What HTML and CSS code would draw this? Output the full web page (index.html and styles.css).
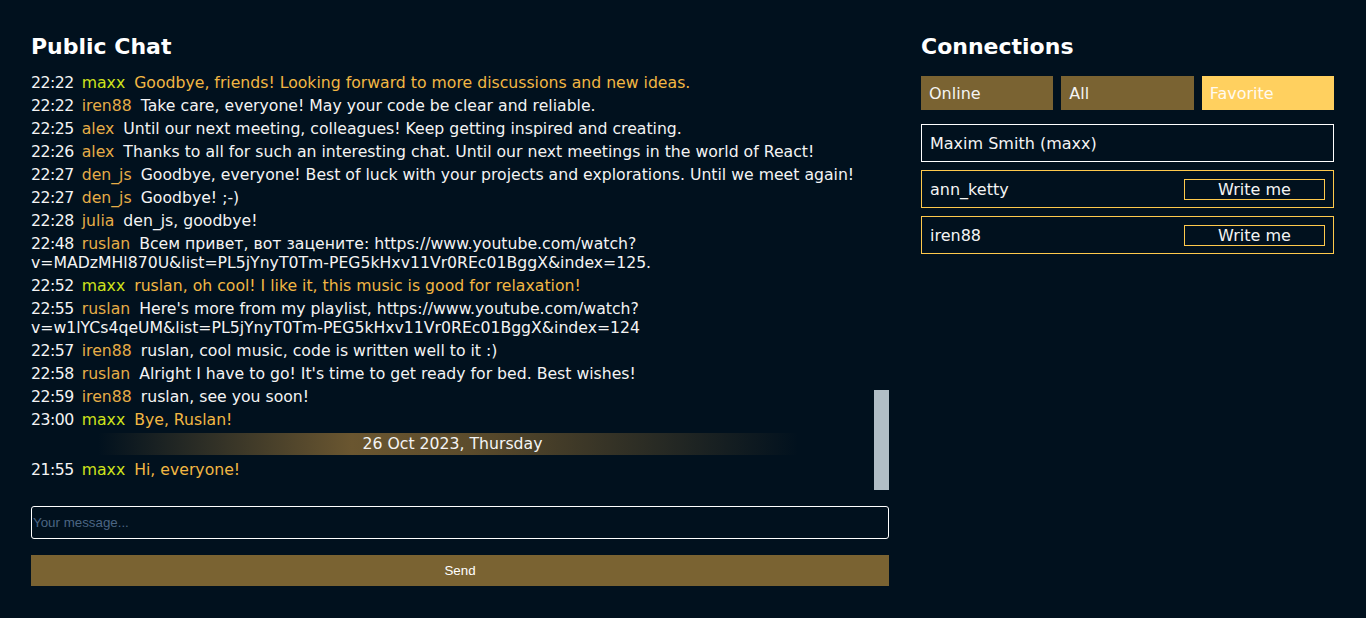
FILE: index.html
```html
<!DOCTYPE html>
<html lang="en">
<head>
<meta charset="utf-8">
<title>Public Chat</title>
<link rel="stylesheet" href="styles.css">
</head>
<body>
<main class="page">
  <section class="chat">
    <h2 class="title">Public Chat</h2>
    <div class="chat-body">
      <div class="scroller">
        <div class="log">
          <div class="msg own"><span class="time">22:22</span><span class="name">maxx</span><span class="text">Goodbye, friends! Looking forward to more discussions and new ideas.</span></div>
          <div class="msg"><span class="time">22:22</span><span class="name">iren88</span><span class="text">Take care, everyone! May your code be clear and reliable.</span></div>
          <div class="msg"><span class="time">22:25</span><span class="name">alex</span><span class="text">Until our next meeting, colleagues! Keep getting inspired and creating.</span></div>
          <div class="msg"><span class="time">22:26</span><span class="name">alex</span><span class="text">Thanks to all for such an interesting chat. Until our next meetings in the world of React!</span></div>
          <div class="msg"><span class="time">22:27</span><span class="name">den_js</span><span class="text">Goodbye, everyone! Best of luck with your projects and explorations. Until we meet again!</span></div>
          <div class="msg"><span class="time">22:27</span><span class="name">den_js</span><span class="text">Goodbye! ;-)</span></div>
          <div class="msg"><span class="time">22:28</span><span class="name">julia</span><span class="text">den_js, goodbye!</span></div>
          <div class="msg"><span class="time">22:48</span><span class="name">ruslan</span><span class="text">Всем привет, вот зацените: https://www.youtube.com/watch?<wbr>v=MADzMHl870U&amp;list=PL5jYnyT0Tm-PEG5kHxv11Vr0REc01BggX&amp;index=125.</span></div>
          <div class="msg own"><span class="time">22:52</span><span class="name">maxx</span><span class="text">ruslan, oh cool! I like it, this music is good for relaxation!</span></div>
          <div class="msg"><span class="time">22:55</span><span class="name">ruslan</span><span class="text">Here's more from my playlist, https://www.youtube.com/watch?<wbr>v=w1lYCs4qeUM&amp;list=PL5jYnyT0Tm-PEG5kHxv11Vr0REc01BggX&amp;index=124</span></div>
          <div class="msg"><span class="time">22:57</span><span class="name">iren88</span><span class="text">ruslan, cool music, code is written well to it :)</span></div>
          <div class="msg"><span class="time">22:58</span><span class="name">ruslan</span><span class="text">Alright I have to go! It's time to get ready for bed. Best wishes!</span></div>
          <div class="msg"><span class="time">22:59</span><span class="name">iren88</span><span class="text">ruslan, see you soon!</span></div>
          <div class="msg own"><span class="time">23:00</span><span class="name">maxx</span><span class="text">Bye, Ruslan!</span></div>
          <div class="day">26 Oct 2023, Thursday</div>
          <div class="msg own"><span class="time">21:55</span><span class="name">maxx</span><span class="text">Hi, everyone!</span></div>
        </div>
      </div>
      <div class="rail"><div class="thumb"></div></div>
    </div>
    <form class="composer">
      <input class="field" type="text" placeholder="Your message...">
      <button class="send" type="button">Send</button>
    </form>
  </section>

  <aside class="connections">
    <h2 class="title">Connections</h2>
    <div class="tabs">
      <button class="tab" type="button">Online</button>
      <button class="tab" type="button">All</button>
      <button class="tab tab-active" type="button">Favorite</button>
    </div>
    <ul class="contacts">
      <li class="contact contact-self">Maxim Smith (maxx)</li>
      <li class="contact"><span>ann_ketty</span><button class="write" type="button">Write me</button></li>
      <li class="contact"><span>iren88</span><button class="write" type="button">Write me</button></li>
    </ul>
  </aside>
</main>
</body>
</html>
```

FILE: styles.css
```css
* { box-sizing: border-box; }

html, body {
  margin: 0;
  height: 100%;
}

body {
  background: #01111e;
  color: #f4f4f4;
  font-family: "DejaVu Sans", "Noto Sans", sans-serif;
  font-size: 15.7px;
  overflow: hidden;
}

.page {
  display: grid;
  grid-template-columns: 1fr 413px;
  column-gap: 32px;
  padding: 31px 32px 0 31px;
}

.title {
  margin: 0 0 7px;
  font-size: 22px;
  line-height: 32px;
  font-weight: 700;
  color: #ffffff;
}

/* chat log */
.chat-body {
  display: flex;
  height: 420px;
}

.scroller {
  flex: 1;
  min-width: 0;
  overflow: hidden;
  display: flex;
  flex-direction: column;
  justify-content: flex-end;
}

.rail {
  width: 15px;
  display: flex;
  flex-direction: column;
  justify-content: flex-end;
}

.thumb {
  height: 100px;
  background: #b1bec6;
}

.log {
  padding: 0 0 7px;
}

.msg {
  line-height: 19px;
  margin-bottom: 4px;
  color: #f4f4f4;
}

.time {
  margin-right: 8px;
  letter-spacing: -0.5px;
}

.name {
  margin-right: 9px;
  color: #e6ad47;
}

.own .name { color: #cfe21b; }
.own .text { color: #f2b743; }

.day {
  height: 22px;
  line-height: 22px;
  margin-bottom: 5px;
  text-align: center;
  color: #f4f4f4;
  background: linear-gradient(90deg, rgba(122, 99, 50, 0) 8%, #6a5630 38%, #5c4c2c 52%, rgba(122, 99, 50, 0) 91%);
}

/* composer */
.composer {
  display: flex;
  flex-direction: column;
  gap: 16px;
  margin-top: 16px;
}

.field {
  height: 33px;
  width: 100%;
  padding: 0 1px;
  border: 1px solid #ffffff;
  border-radius: 3px;
  background: transparent;
  color: #ffffff;
  font-family: "Liberation Sans", Arial, sans-serif;
  font-size: 13.333px;
  outline: none;
}
.field::placeholder {
  color: #4b6583;
}

.send {
  height: 31px;
  width: 100%;
  border: 0;
  background: #7a6332;
  color: #ffffff;
  font-family: "Liberation Sans", Arial, sans-serif;
  font-size: 13.333px;
}

/* connections */
.tabs {
  display: grid;
  grid-template-columns: repeat(3, 1fr);
  gap: 8px;
  margin-top: 13px;
}

.tab {
  height: 34px;
  border: 0;
  padding: 0 8px;
  text-align: left;
  background: #7a6332;
  color: #f4f4f4;
  font-family: "DejaVu Sans", "Noto Sans", sans-serif;
  font-size: 16px;
}

.tab-active {
  background: #ffd05f;
  color: #fffaf0;
}

.contacts {
  list-style: none;
  margin: 14px 0 0;
  padding: 0;
  display: flex;
  flex-direction: column;
  gap: 8px;
}

.contact {
  height: 38px;
  padding: 0 8px;
  display: flex;
  align-items: center;
  justify-content: space-between;
  border: 1px solid #ffc94c;
  color: #f4f4f4;
  font-size: 16px;
}

.contact-self {
  border-color: #ffffff;
}

.write {
  width: 141px;
  height: 21px;
  padding: 0;
  border: 1px solid #ffc94c;
  background: transparent;
  color: #f4f4f4;
  font-family: "DejaVu Sans", "Noto Sans", sans-serif;
  font-size: 16px;
  line-height: 19px;
}
```
